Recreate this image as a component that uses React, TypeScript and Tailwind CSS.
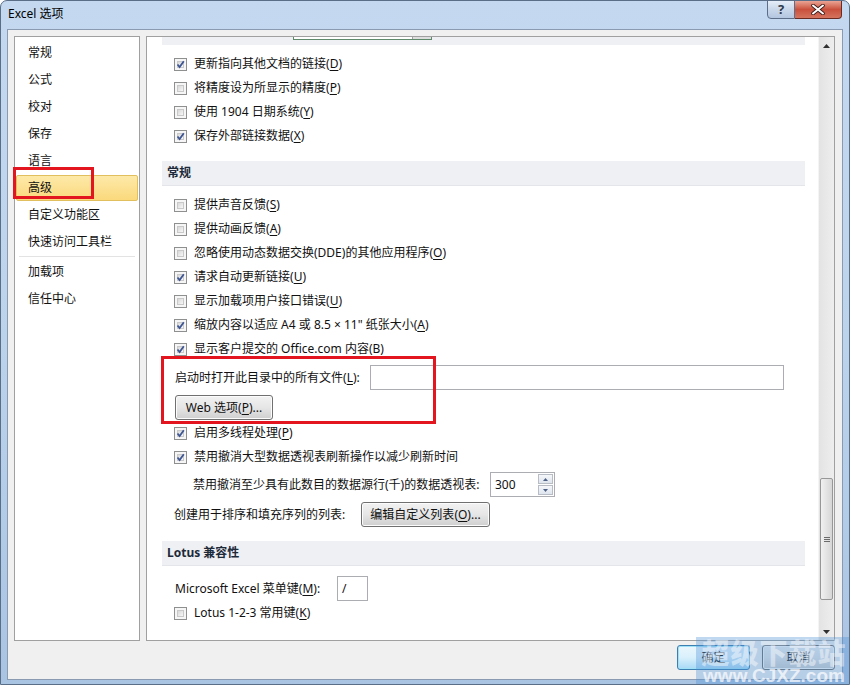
import type { ReactNode } from "react";

const NAV_ITEMS = ["常规", "公式", "校对", "保存", "语言", "高级", "自定义功能区", "快速访问工具栏"];
const NAV_EXTRA = ["加载项", "信任中心"];

function Key({ k }: { k: string }) {
  return (
    <>
      (<span className="underline underline-offset-2">{k}</span>)
    </>
  );
}

function CheckBox({ checked }: { checked?: boolean }) {
  return (
    <span className="relative w-[13px] h-[13px] shrink-0 border border-[#8e8f8f] bg-[#f6f6f6] p-[2px] flex">
      <span className="flex-1 border border-[#c9c9c9] bg-gradient-to-br from-[#d8d8d8] to-[#f7f7f7]" />
      {checked && (
        <svg className="absolute inset-0" width="11" height="11" viewBox="0 0 11 11">
          <path d="M2.5 5.5 L4.6 8 L8.8 2.2" fill="none" stroke="#3d5593" strokeWidth="1.8" />
        </svg>
      )}
    </span>
  );
}

function CheckRow({ checked, children }: { checked?: boolean; children: ReactNode }) {
  return (
    <div className="h-6 flex items-center gap-[7px] pl-[27px] whitespace-nowrap">
      <CheckBox checked={checked} />
      <span>{children}</span>
    </div>
  );
}

function SectionHeader({ children }: { children: ReactNode }) {
  return (
    <div className="ml-[15px] mr-[13px] h-[25px] flex items-center pl-[5px] bg-[#eff0f3] border-b border-[#e3e5ea] font-bold text-[#1d2a3a]">
      {children}
    </div>
  );
}

function Button({ children, className = "" }: { children: ReactNode; className?: string }) {
  return (
    <div
      className={`h-[25px] flex items-center justify-center rounded-[3px] border border-[#707070] bg-gradient-to-b from-[#f2f2f2] via-[#e6e6e6] to-[#cfcfcf] shadow-[inset_0_0_0_1px_#fcfcfc] whitespace-nowrap ${className}`}
    >
      {children}
    </div>
  );
}

function TextBox({ className = "", children }: { className?: string; children?: ReactNode }) {
  return (
    <div className={`h-[25px] border border-[#abadb3] bg-white flex items-center pl-[4px] ${className}`}>
      {children}
    </div>
  );
}

export default function App() {
  return (
    <div className="relative w-[850px] h-[685px] overflow-hidden rounded-t-[7px] border border-[#5a6e88] bg-gradient-to-b from-[#c4d9f0] via-[#bcd3ec] to-[#a9c4e2] font-['Noto_Sans','Noto_Sans_CJK_SC',sans-serif] text-[12px] text-[#111]">
      {/* title bar */}
      <div className="h-[28px] flex justify-between pl-[7px] pr-[7px]">
        <div className="pt-[4px] text-black">Excel 选项</div>
        <div className="flex self-start -mt-px">
          <div className="w-[28px] h-[19px] rounded-bl-[4px] border border-[#5d6f88] bg-gradient-to-b from-[#e6eef8] via-[#c9d7ea] to-[#b3c6df] flex items-center justify-center text-[13px] font-bold text-[#2f3a4a] leading-none">
            ?
          </div>
          <div className="w-[47px] h-[19px] rounded-br-[4px] border border-l-0 border-[#6b2a22] bg-gradient-to-b from-[#eaa494] via-[#c9503c] to-[#d5735e] flex items-center justify-center">
            <svg width="14" height="11" viewBox="0 0 14 11">
              <path d="M2 1.5 L12 9.5 M12 1.5 L2 9.5" stroke="#3a1a16" strokeWidth="3.6" strokeLinecap="round" />
              <path d="M2 1.5 L12 9.5 M12 1.5 L2 9.5" stroke="#ffffff" strokeWidth="2" strokeLinecap="round" />
            </svg>
          </div>
        </div>
      </div>

      {/* client area */}
      <div className="ml-[6px] w-[836px] h-[651px] border border-[#8a9ab0] bg-[#f0f0f0] flex flex-col pl-[6px] pt-[6px]">
        <div className="flex gap-[6px] h-[605px]">
          {/* nav */}
          <div className="w-[126px] border border-[#a0a0a0] bg-white pt-[2px] flex flex-col">
            {NAV_ITEMS.map((item) =>
              item === "高级" ? (
                <div key={item} className="h-[27px] flex items-center">
                  <div className="ml-px w-[122px] h-[26px] rounded-[2px] border border-[#e2bf5e] bg-gradient-to-b from-[#fde9a8] to-[#fbd97c] flex items-center pl-[11px]">
                    {item}
                  </div>
                </div>
              ) : (
                <div key={item} className="h-[27px] flex items-center pl-[13px]">
                  {item}
                </div>
              )
            )}
            <div className="h-[3px] flex items-center px-[4px]">
              <div className="h-px w-full bg-[#e3e3e3]" />
            </div>
            {NAV_EXTRA.map((item) => (
              <div key={item} className="h-[27px] flex items-center pl-[13px]">
                {item}
              </div>
            ))}
          </div>

          {/* content */}
          <div className="w-[689px] border border-[#a0a0a0] bg-white flex">
            <div className="flex-1 flex flex-col">
              <div className="ml-[15px] mr-[13px] h-[8px] bg-[#eff0f3] relative">
                <div className="ml-[131px] w-[139px] h-[3px] bg-white border-x border-b border-[#5e8a6b] flex justify-end">
                  <div className="w-[19px] h-full bg-[#dedede] border-l border-[#a0a0a0]" />
                </div>
              </div>
              <div className="h-[7px]" />
              <CheckRow checked>
                更新指向其他文档的链接<Key k="D" />
              </CheckRow>
              <CheckRow>
                将精度设为所显示的精度<Key k="P" />
              </CheckRow>
              <CheckRow>
                使用 1904 日期系统<Key k="Y" />
              </CheckRow>
              <CheckRow checked>
                保存外部链接数据<Key k="X" />
              </CheckRow>
              <div className="h-[13px]" />
              <SectionHeader>常规</SectionHeader>
              <div className="h-[7px]" />
              <CheckRow>
                提供声音反馈<Key k="S" />
              </CheckRow>
              <CheckRow>
                提供动画反馈<Key k="A" />
              </CheckRow>
              <CheckRow>
                忽略使用动态数据交换(DDE)的其他应用程序<Key k="O" />
              </CheckRow>
              <CheckRow checked>
                请求自动更新链接<Key k="U" />
              </CheckRow>
              <CheckRow>
                显示加载项用户接口错误<Key k="U" />
              </CheckRow>
              <CheckRow checked>
                缩放内容以适应 A4 或 8.5 × 11" 纸张大小<Key k="A" />
              </CheckRow>
              <CheckRow checked>
                显示客户提交的 Office.com 内容(B)
              </CheckRow>

              <div className="mt-[4px] flex items-center pl-[28px]">
                <div className="w-[195px] whitespace-nowrap">
                  启动时打开此目录中的所有文件<Key k="L" />:
                </div>
                <TextBox className="w-[414px] h-[24px]" />
              </div>
              <div className="mt-[5px] pl-[28px] flex">
                <Button className="w-[98px]">
                  Web 选项<Key k="P" />...
                </Button>
              </div>
              <div className="mt-px" />
              <CheckRow checked>
                启用多线程处理<Key k="P" />
              </CheckRow>
              <CheckRow checked>禁用撤消大型数据透视表刷新操作以减少刷新时间</CheckRow>
              <div className="mt-[3px] flex items-center pl-[46px]">
                <div className="w-[297px] whitespace-nowrap">禁用撤消至少具有此数目的数据源行(千)的数据透视表:</div>
                <TextBox className="w-[65px] pr-px">
                  <span className="flex-1">300</span>
                  <div className="w-[15px] h-[21px] flex flex-col gap-px">
                    <div className="flex-1 border border-[#b8bcc4] bg-gradient-to-b from-[#f5f7fa] to-[#dfe5ee] flex items-center justify-center">
                      <svg width="5" height="3" viewBox="0 0 5 3">
                        <path d="M0 3 L2.5 0 L5 3 Z" fill="#4d6185" />
                      </svg>
                    </div>
                    <div className="flex-1 border border-[#b8bcc4] bg-gradient-to-b from-[#f5f7fa] to-[#dfe5ee] flex items-center justify-center">
                      <svg width="5" height="3" viewBox="0 0 5 3">
                        <path d="M0 0 L2.5 3 L5 0 Z" fill="#4d6185" />
                      </svg>
                    </div>
                  </div>
                </TextBox>
              </div>
              <div className="mt-[5px] flex items-center pl-[27px]">
                <div className="w-[187px] whitespace-nowrap">创建用于排序和填充序列的列表:</div>
                <Button className="w-[129px]">
                  编辑自定义列表<Key k="O" />...
                </Button>
              </div>
              <div className="h-[14px]" />
              <SectionHeader>Lotus 兼容性</SectionHeader>
              <div className="mt-[10px] flex items-center pl-[28px]">
                <div className="w-[162px] whitespace-nowrap">
                  Microsoft Excel 菜单键<Key k="M" />:
                </div>
                <TextBox className="w-[31px]">/</TextBox>
              </div>
              <CheckRow>
                Lotus 1-2-3 常用键<Key k="K" />
              </CheckRow>
            </div>

            {/* scrollbar */}
            <div className="w-[16px] flex flex-col bg-gradient-to-r from-[#e3e3e3] to-[#eeeeee] border-l border-[#f4f4f4]">
              <div className="h-[17px] flex items-center justify-center">
                <svg width="7" height="4" viewBox="0 0 7 4">
                  <path d="M0 4 L3.5 0 L7 4 Z" fill="#303030" />
                </svg>
              </div>
              <div className="flex-1 flex flex-col">
                <div className="mt-[424px] h-[122px] mx-px rounded-[2px] border border-[#979797] bg-gradient-to-r from-[#f1f1f1] to-[#d6d6d6] flex items-center justify-center">
                  <div className="flex flex-col gap-px">
                    <div className="w-[6px] h-px bg-[#6b6b6b]" />
                    <div className="w-[6px] h-px bg-[#6b6b6b]" />
                    <div className="w-[6px] h-px bg-[#6b6b6b]" />
                  </div>
                </div>
              </div>
              <div className="h-[17px] flex items-center justify-center">
                <svg width="7" height="4" viewBox="0 0 7 4">
                  <path d="M0 0 L3.5 4 L7 0 Z" fill="#303030" />
                </svg>
              </div>
            </div>
          </div>
        </div>

        {/* footer */}
        <div className="flex justify-end gap-[12px] pr-[7px] mt-[4px]">
          <div className="w-[73px] h-[25px] rounded-[3px] border border-[#3c7fb1] bg-gradient-to-b from-[#eaf6fd] via-[#d9f0fc] to-[#a7d9f5] shadow-[inset_0_0_0_1px_#9fe2f8] flex items-center justify-center">
            确定
          </div>
          <Button className="w-[73px]">取消</Button>
        </div>
      </div>

      {/* annotation boxes */}
      <div className="absolute left-[12px] top-[166px] w-[81px] h-[32px] border-[3px] border-[#e3161f]" />
      <div className="absolute left-[160px] top-[355px] w-[275px] h-[68px] border-[3px] border-[#e3161f]" />

      {/* watermark */}
      <div className="absolute left-[695px] top-[636px] w-[156px] h-[50px] bg-[#4d8fd6]/35 flex flex-col items-center leading-none">
        <div className="mt-[1px] text-[28px] font-black text-white/45 tracking-[1px] font-['Noto_Sans_CJK_SC',sans-serif]">
          超级下载站
        </div>
        <div className="text-[19px] font-black text-white/70 font-['Liberation_Sans',sans-serif]">www.CJXZ.com</div>
      </div>
    </div>
  );
}
